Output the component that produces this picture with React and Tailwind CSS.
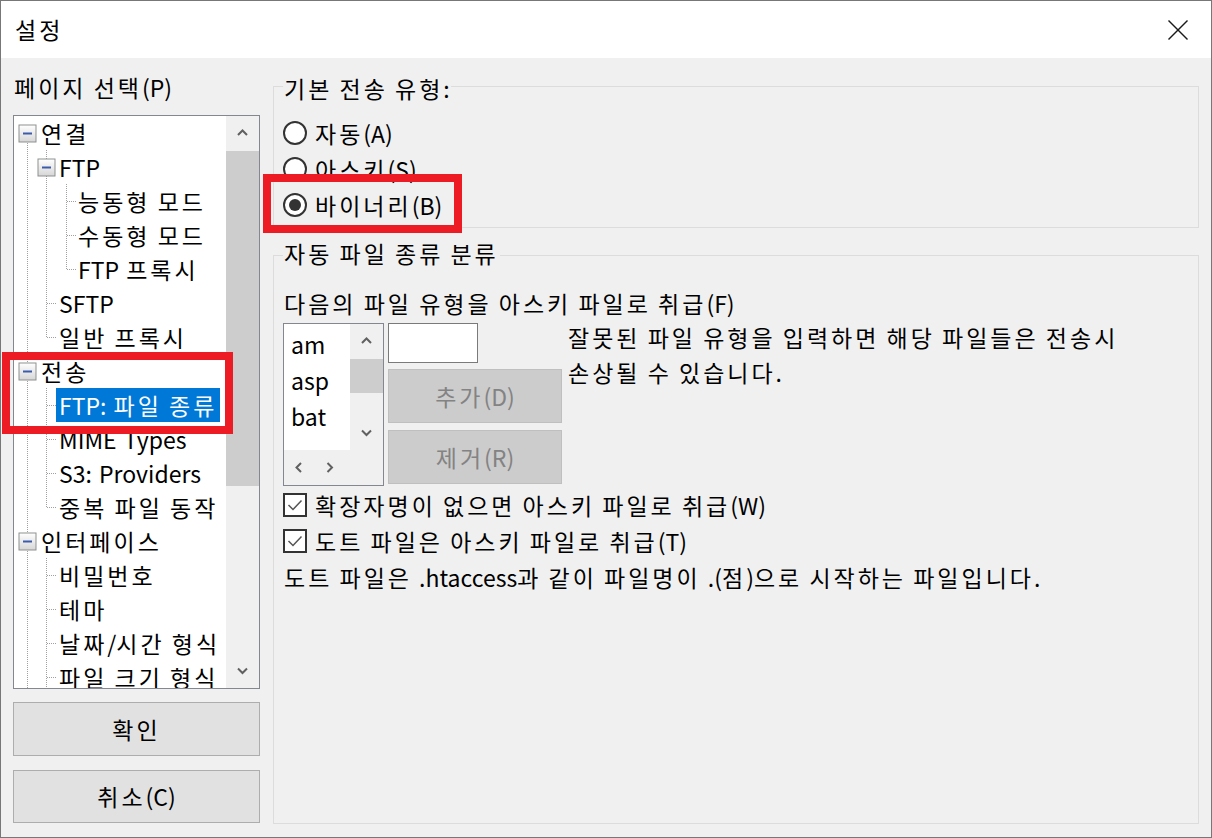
import React from "react";

// tree rows of the settings page selector
const treeRows = [
  { text: "연결", level: 0, open: true },
  { text: "FTP", level: 1, open: true },
  { text: "능동형 모드", level: 2 },
  { text: "수동형 모드", level: 2 },
  { text: "FTP 프록시", level: 2 },
  { text: "SFTP", level: 1 },
  { text: "일반 프록시", level: 1 },
  { text: "전송", level: 0, open: true },
  { text: "FTP: 파일 종류", level: 1, selected: true },
  { text: "MIME Types", level: 1 },
  { text: "S3: Providers", level: 1 },
  { text: "중복 파일 동작", level: 1 },
  { text: "인터페이스", level: 0, open: true },
  { text: "비밀번호", level: 1 },
  { text: "테마", level: 1 },
  { text: "날짜/시간 형식", level: 1 },
  { text: "파일 크기 형식", level: 1 },
];

const rowPad = { 0: "pl-[27px]", 1: "pl-[45px]", 2: "pl-[64px]" };

// Hangul in Malgun Gothic runs a bit wider than Noto, so widen those runs only
const T = ({ children }) => (
  <span className="whitespace-pre">
    {children.split(/([가-힣]+)/).map((part, i) =>
      /[가-힣]/.test(part) ? (
        <span key={i} className="tracking-[3px]">{part}</span>
      ) : (
        <React.Fragment key={i}>{part}</React.Fragment>
      )
    )}
  </span>
);

const Chevron = ({ dir = "up" }) => {
  const pts = {
    up: "1,6 5.5,1.5 10,6",
    down: "1,1.5 5.5,6 10,1.5",
    left: "6,1 1.5,5.5 6,10",
    right: "1.5,1 6,5.5 1.5,10",
  }[dir];
  const wide = dir === "up" || dir === "down";
  return (
    <svg width={wide ? 11 : 8} height={wide ? 8 : 11} viewBox={wide ? "0 0 11 8" : "0 0 8 11"}>
      <polyline points={pts} fill="none" stroke="#606060" strokeWidth="2" />
    </svg>
  );
};

const Expander = ({ cx, cy }) => (
  <g>
    <rect x={cx - 8.5} y={cy - 8.5} width="17" height="17" fill="url(#expGrad)" stroke="#8e8f8f" />
    <line x1={cx - 4.5} y1={cy} x2={cx + 4.5} y2={cy} stroke="#3b5bab" strokeWidth="2" />
  </g>
);

const TreeLines = () => {
  const c = (i) => 17 + i * 34;
  const dot = { stroke: "#a0a0a0", strokeWidth: 1, strokeDasharray: "1 1" };
  const leaf1 = [5, 6, 8, 9, 10, 11, 13, 14, 15, 16];
  const leaf2 = [2, 3, 4];
  return (
    <svg className="absolute inset-0 pointer-events-none" width="212" height="572">
      <defs>
        <linearGradient id="expGrad" x1="0" y1="0" x2="0" y2="1">
          <stop offset="0" stopColor="#ffffff" />
          <stop offset="1" stopColor="#d6d6d6" />
        </linearGradient>
      </defs>
      <line x1="13.5" y1="17" x2="13.5" y2="572" {...dot} />
      <line x1="32.5" y1="34" x2="32.5" y2={c(6)} {...dot} />
      <line x1="52.5" y1="68" x2="52.5" y2={c(4)} {...dot} />
      <line x1="32.5" y1="272" x2="32.5" y2={c(11)} {...dot} />
      <line x1="32.5" y1="442" x2="32.5" y2="572" {...dot} />
      {leaf1.map((i) => (
        <line key={"a" + i} x1="33" y1={c(i) + 0.5} x2="43" y2={c(i) + 0.5} {...dot} />
      ))}
      {leaf2.map((i) => (
        <line key={"b" + i} x1="53" y1={c(i) + 0.5} x2="63" y2={c(i) + 0.5} {...dot} />
      ))}
      <Expander cx={13.5} cy={c(0) + 0.5} />
      <Expander cx={32.5} cy={c(1) + 0.5} />
      <Expander cx={13.5} cy={c(7) + 0.5} />
      <Expander cx={13.5} cy={c(12) + 0.5} />
    </svg>
  );
};

const Radio = ({ checked, label }) => (
  <div className="h-[34px] flex items-center">
    <div className="w-[24px] h-[24px] rounded-full border-2 border-[#333] bg-white flex items-center justify-center ml-[9px]">
      {checked && <div className="w-[12px] h-[12px] rounded-full bg-[#333]"></div>}
    </div>
    <span className="ml-[8px]"><T>{label}</T></span>
  </div>
);

const Check = ({ label }) => (
  <div className="h-[36px] flex items-center">
    <div className="w-[24px] h-[24px] border-2 border-[#333] bg-white flex items-center justify-center">
      <svg width="18" height="18" viewBox="0 0 18 18">
        <polyline points="2.5,9 7,13.5 15.5,4.5" fill="none" stroke="#555" strokeWidth="1.5" />
      </svg>
    </div>
    <span className="ml-[8px]"><T>{label}</T></span>
  </div>
);

export default function App() {
  return (
    <div className="relative w-[1212px] h-[838px] border border-[#777] bg-[#f0f0f0] flex flex-col overflow-hidden font-['Noto_Sans_CJK_KR','Noto_Sans',sans-serif] text-[23px] [word-spacing:2px] text-black leading-none">

      {/* Title bar */}
      <div className="h-[57px] bg-white flex items-center justify-between pl-[14px]">
        <T>설정</T>
        <svg width="20" height="20" viewBox="0 0 20 20" className="mr-[23px]">
          <line x1="0.5" y1="0.5" x2="19.5" y2="19.5" stroke="#1a1a1a" strokeWidth="1.4" />
          <line x1="19.5" y1="0.5" x2="0.5" y2="19.5" stroke="#1a1a1a" strokeWidth="1.4" />
        </svg>
      </div>

      {/* Body */}
      <div className="flex-1 flex pl-[12px] pr-[12px] gap-[13px]">

        {/* Left column */}
        <div className="w-[247px] flex flex-col pt-[12px] pb-[14px]">
          <div className="h-[34px] flex items-center pl-[1px]"><T>페이지 선택(P)</T></div>
          <div className="mt-[11px] h-[574px] border border-[#828790] bg-white flex">
            <div className="relative flex-1 overflow-hidden">
              <TreeLines />
              {treeRows.map((r, i) => (
                <div key={i} className={"relative h-[34px] flex items-center whitespace-nowrap " + (r.selected ? "pl-[42px]" : rowPad[r.level])}>
                  {r.selected ? (
                    <span className="h-[34px] flex items-center px-[3px] bg-[#0078d7] text-white"><T>{r.text}</T></span>
                  ) : (
                    <T>{r.text}</T>
                  )}
                </div>
              ))}
            </div>
            <div className="w-[33px] bg-[#f0f0f0] flex flex-col">
              <div className="h-[34px] flex items-center justify-center"><Chevron dir="up" /></div>
              <div className="h-[335px] mt-[1px] bg-[#cdcdcd]"></div>
              <div className="flex-1"></div>
              <div className="h-[34px] flex items-center justify-center"><Chevron dir="down" /></div>
            </div>
          </div>
          <button className="mt-[13px] h-[54px] bg-[#e1e1e1] border border-[#adadad]"><T>확인</T></button>
          <button className="mt-[14px] h-[53px] bg-[#e1e1e1] border border-[#adadad]"><T>취소(C)</T></button>
        </div>

        {/* Right column */}
        <div className="w-[926px] flex flex-col pt-[12px] pb-[13px]">

          <fieldset className="h-[158px] border border-[#dcdcdc]">
            <legend className="ml-[9px] px-[1px] pt-[6px] pb-[2px] leading-[24px]"><T>기본 전송 유형:</T></legend>
            <div className="flex flex-col gap-[2px] pt-[14px]">
              <Radio label="자동(A)" />
              <Radio label="아스키(S)" />
              <Radio label="바이너리(B)" checked />
            </div>
          </fieldset>

          <fieldset className="mt-[11px] flex-1 border border-[#dcdcdc]">
            <legend className="ml-[9px] px-[1px] pt-[2px] pb-[6px] leading-[24px]"><T>자동 파일 종류 분류</T></legend>
            <div className="pl-[9px] pt-[15px] flex flex-col">
              <div className="h-[34px] flex items-center pl-[1px]"><T>다음의 파일 유형을 아스키 파일로 취급(F)</T></div>
              <div className="mt-[3px] flex">
                {/* list box */}
                <div className="w-[101px] h-[163px] border border-[#828790] bg-[#f0f0f0] flex flex-col">
                  <div className="h-[126px] flex">
                    <div className="w-[66px] bg-white pt-[2px] pl-[7px]">
                      <div className="h-[36px] flex items-center">am</div>
                      <div className="h-[36px] flex items-center">asp</div>
                      <div className="h-[36px] flex items-center">bat</div>
                    </div>
                    <div className="w-[33px] flex flex-col">
                      <div className="h-[34px] flex items-center justify-center"><Chevron dir="up" /></div>
                      <div className="h-[34px] mt-[1px] bg-[#cdcdcd]"></div>
                      <div className="flex-1"></div>
                      <div className="h-[34px] flex items-center justify-center"><Chevron dir="down" /></div>
                    </div>
                  </div>
                  <div className="flex-1 flex items-center pl-[11px] gap-[23px]">
                    <Chevron dir="left" />
                    <Chevron dir="right" />
                  </div>
                </div>

                {/* input and buttons */}
                <div className="ml-[4px] w-[174px] flex flex-col">
                  <div className="w-[90px] h-[40px] border border-[#7a7a7a] bg-white"></div>
                  <button className="mt-[6px] h-[54px] bg-[#cccccc] border border-[#bfbfbf] text-[#838383]"><T>추가(D)</T></button>
                  <button className="mt-[7px] h-[54px] bg-[#cccccc] border border-[#bfbfbf] text-[#838383]"><T>제거(R)</T></button>
                </div>

                <div className="ml-[6px] leading-[35px] -mt-[3px]">
                  <div><T>잘못된 파일 유형을 입력하면 해당 파일들은 전송시</T></div>
                  <div><T>손상될 수 있습니다.</T></div>
                </div>
              </div>

              <div className="flex flex-col mt-[1px]">
                <Check label="확장자명이 없으면 아스키 파일로 취급(W)" />
                <Check label="도트 파일은 아스키 파일로 취급(T)" />
                <div className="h-[36px] flex items-center pl-[1px]"><T>도트 파일은 .htaccess과 같이 파일명이 .(점)으로 시작하는 파일입니다.</T></div>
              </div>
            </div>
          </fieldset>
        </div>
      </div>

      {/* red highlight marks */}
      <div className="absolute left-[1px] top-[351px] w-[231px] h-[82px] border-[8px] border-[#ed1c24] pointer-events-none"></div>
      <div className="absolute left-[262px] top-[173px] w-[199px] h-[59px] border-[8px] border-[#ed1c24] pointer-events-none"></div>
    </div>
  );
}
